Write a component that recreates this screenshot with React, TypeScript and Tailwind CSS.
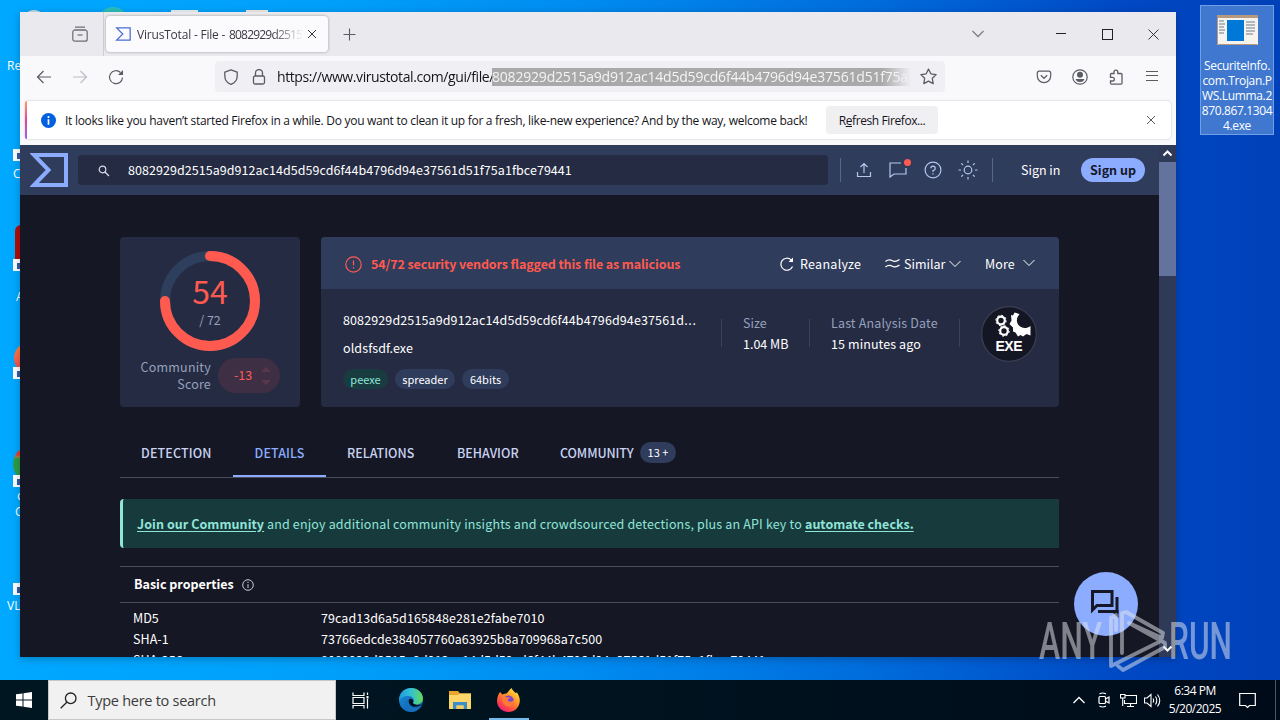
import type { ReactNode } from "react";

const hash = "8082929d2515a9d912ac14d5d59cd6f44b4796d94e37561d51f75a1fbce79441";

function Icon({ size = 16, box = 16, sw = 1.2, className = "", children }: { size?: number; box?: number; sw?: number; className?: string; children: ReactNode }) {
  return (
    <svg width={size} height={size} viewBox={`0 0 ${box} ${box}`} fill="none" stroke="currentColor" strokeWidth={sw} className={"shrink-0 " + className}>
      {children}
    </svg>
  );
}

function Sigma({ size, h, color, sw }: { size: number; h: number; color: string; sw: number }) {
  return (
    <svg width={size} height={h} viewBox="0 0 38 34" preserveAspectRatio="none" fill="none" stroke={color} strokeWidth={sw} className="shrink-0">
      <path d="M4 2H36V32H4L18.500 17Z" />
    </svg>
  );
}

function TabStrip() {
  return (
    <div className="flex h-11 shrink-0 bg-[#eaeaee] text-[#5b5b66]">
      <div className="flex w-[84px] items-center justify-end border-r border-[#cfcfd6] pr-[15px]">
        <Icon size={16} className="text-[#6c6c74]">
          <path d="M3 1.200H13M2 4H14" />
          <rect x="0.800" y="4" width="14.400" height="11.200" rx="2" />
          <path d="M5.500 9H10.500" />
        </Icon>
      </div>
      <div className="my-1 ml-0.5 flex w-[222px] items-center rounded bg-[#fbfbfd] pl-[9px] pr-2.5 shadow-[0_0_3px_rgba(0,0,0,0.35)]">
        <Sigma size={16} h={14} color="#4a6dd0" sw={3} />
        <div className="ml-1.5 flex w-[165px] whitespace-nowrap pt-px font-['Open_Sans','Noto_Sans',sans-serif] text-[12px] text-[#3a3944] [mask-image:linear-gradient(90deg,#000_135px,transparent_166px)]">
          <span className="w-[92px] shrink-0 tracking-[-0.2px]">VirusTotal - File -</span>
          <span className="tracking-[-0.8px]">8082929d2515</span>
        </div>
        <Icon size={10} box={10} sw={1} className="ml-[5px] text-[#33333b]">
          <path d="M1 1L9 9M9 1L1 9" />
        </Icon>
      </div>
      <div className="flex w-[42px] items-center justify-center">
        <Icon size={13} box={13} sw={1.1}>
          <path d="M6.500 0.500V12.500M0.500 6.500H12.500" />
        </Icon>
      </div>
      <div className="flex-1" />
      <div className="flex w-9 items-center justify-center">
        <Icon size={14} box={14} sw={1.3} className="text-[#7d7d85]">
          <path d="M1.500 4L7 9.500L12.500 4" />
        </Icon>
      </div>
      <div className="ml-[42px] flex w-[46px] items-center justify-center text-[#222]">
        <Icon size={10} box={10} sw={1}><path d="M0 4.500H10" /></Icon>
      </div>
      <div className="flex w-[46px] items-center justify-center text-[#222]">
        <Icon size={11} box={11} sw={1}><rect x="0.500" y="0.500" width="10" height="10" /></Icon>
      </div>
      <div className="flex w-[46px] items-center justify-center text-[#222]">
        <Icon size={11} box={11} sw={0.9}><path d="M0.500 0.500L10.500 10.500M10.500 0.500L0.500 10.500" /></Icon>
      </div>
    </div>
  );
}

function ToolButton({ children }: { children: ReactNode }) {
  return <div className="flex h-full w-9 shrink-0 items-center justify-center">{children}</div>;
}

function NavBar() {
  return (
    <div className="flex h-[41px] shrink-0 items-center bg-[#f9f9fb] px-1.5 text-[#5b5b66]">
      <ToolButton><Icon><path d="M15 8H1.500M7.500 2L1.500 8L7.500 14" /></Icon></ToolButton>
      <ToolButton><Icon className="text-[#bdbdc4]"><path d="M1 8H14.500M8.500 2L14.500 8L8.500 14" /></Icon></ToolButton>
      <ToolButton>
        <Icon><path d="M14.500 8.500A6.500 6.500 0 1 1 12.500 3.500" /><path d="M15 1V6H10Z" fill="currentColor" stroke="none" /></Icon>
      </ToolButton>
      <div className="ml-[81px] flex h-[31px] w-[730px] items-center rounded bg-[#f0f0f4] pl-2">
        <Icon sw={1.300}><path d="M8 0.800L14.200 3.200V7C14.200 11 11.500 14 8 15.300C4.500 14 1.800 11 1.800 7V3.200Z" strokeLinejoin="round" /></Icon>
        <Icon sw={1.300} className="ml-3">
          <rect x="2.500" y="7" width="11" height="8" rx="1.500" />
          <path d="M4.500 7V4A3.500 3.500 0 0 1 11.500 4V7" />
        </Icon>
        <div className="ml-2.5 flex w-[634px] whitespace-nowrap font-['Open_Sans','Noto_Sans',sans-serif] text-[14px] leading-[18px] [mask-image:linear-gradient(90deg,#000_605px,transparent_634px)]">
          <span className="w-[215px] shrink-0 tracking-[-0.41px] text-[#15141a]">https://www.virustotal.com/gui/file/</span>
          <span className="w-[419px] shrink-0 bg-[#a9a9a9] tracking-[-0.2px] text-[#f4f4f4]">{hash.slice(0, 54)}</span>
        </div>
        <Icon size={17} sw={1.200} className="ml-[9px] text-[#5b5b66]">
          <path d="M8 1L10.200 5.500L15.200 6.200L11.600 9.700L12.400 14.700L8 12.300L3.600 14.700L4.400 9.700L0.800 6.200L5.800 5.500Z" strokeLinejoin="round" />
        </Icon>
      </div>
      <div className="flex-1" />
      <ToolButton>
        <Icon><path d="M3 2.200H13A1.700 1.700 0 0 1 14.700 4V7A6.700 6.700 0 0 1 1.300 7V4A1.700 1.700 0 0 1 3 2.200Z" /><path d="M4.800 6.200L8 9.300L11.200 6.200" /></Icon>
      </ToolButton>
      <ToolButton>
        <Icon><circle cx="8" cy="8" r="7.200" /><circle cx="8" cy="5.800" r="2.400" fill="currentColor" /><path d="M3.600 10H12.400C12 12 10.500 13 8 13S4 12 3.600 10Z" fill="currentColor" stroke="none" /></Icon>
      </ToolButton>
      <ToolButton>
        <Icon sw={1.300}><path d="M6 4.500V3A1.900 1.900 0 0 1 9.800 3V4.500H13A1 1 0 0 1 14 5.500V14.300A1 1 0 0 1 13 15.200H3.500A1 1 0 0 1 2.500 14.300V12H4.500A1.800 1.800 0 0 0 4.500 8.300H2.500V5.500A1 1 0 0 1 3.500 4.500Z" /></Icon>
      </ToolButton>
      <ToolButton><Icon><path d="M2 2.500H14M2 6.500H14M2 11.500H14" /></Icon></ToolButton>
    </div>
  );
}

function Notice() {
  return (
    <div className="flex h-12 shrink-0 bg-[#f9f9fb] pb-[6px] pl-[5px] pr-[5px] pt-1">
      <div className="flex flex-1 items-center rounded bg-white shadow-[0_0_2px_rgba(0,0,0,0.25)]">
        <div className="h-full w-0.5 shrink-0 rounded-l bg-linear-to-b from-[#ff9a62] via-[#e0409a] to-[#9059ff]" />
        <svg width="15" height="15" viewBox="0 0 15 15" className="ml-3.5 shrink-0">
          <circle cx="7.500" cy="7.500" r="7.500" fill="#0060df" />
          <path d="M7.500 3V5M7.500 6.300V11.800" stroke="#fff" strokeWidth="1.700" />
        </svg>
        <div className="ml-[9px] w-[745px] whitespace-nowrap pt-0.5 font-['Open_Sans','Noto_Sans',sans-serif] text-[12px] tracking-[-0.28px] text-[#15141a]">
          It looks like you haven’t started Firefox in a while. Do you want to clean it up for a fresh, like-new experience? And by the way, welcome back!
        </div>
        <div className="ml-4 flex h-7 w-[112px] items-center justify-center whitespace-nowrap rounded bg-[#f0f0f3] pt-0.5 font-['Open_Sans','Noto_Sans',sans-serif] text-[12px] tracking-[-0.4px] text-[#15141a]">
          R<span className="underline">e</span>fresh Firefox...
        </div>
        <div className="flex-1" />
        <Icon size={10} box={10} sw={1} className="mr-[15px] text-[#5b5b66]"><path d="M1 1L9 9M9 1L1 9" /></Icon>
      </div>
    </div>
  );
}

function SiteHeader() {
  return (
    <div className="flex h-[50px] shrink-0 items-center bg-[#2f3c5b] pl-2.5 text-[#b5c6f0]">
      <Sigma size={38} h={34} color="#8bacff" sw={4} />
      <div className="ml-2.5 flex h-[30px] w-[750px] items-center rounded bg-[#252b42] pl-5">
        <Icon size={12} box={12} sw={1.200} className="mt-0.5 text-[#d8dcea]"><circle cx="4.500" cy="4.500" r="3.300" /><path d="M7 7L11 11" /></Icon>
        <span className="ml-[18px] whitespace-nowrap text-[12.5px] leading-5 tracking-[0.05px] text-white">{hash}</span>
      </div>
      <div className="ml-3 h-6 w-px bg-[#56678f]" />
      <Icon className="ml-[15px]" sw={1.200}><path d="M8 11V2M4.500 5L8 1.500L11.500 5M1.500 10V14.500H14.500V10" /></Icon>
      <div className="relative ml-[17px] h-[18px] w-[18px]">
        <Icon size={18} box={18} sw={1.200}><path d="M12 2H1V16L5 13H17V7" /></Icon>
        <div className="absolute -right-1 -top-0.5 h-[7px] w-[7px] rounded-full bg-[#ff5a50]" />
      </div>
      <Icon size={18} box={18} className="ml-[17px]"><circle cx="9" cy="9" r="7.900" /><path d="M6.800 7.200A2.200 2.200 0 1 1 9 9.500V11M9 12.200V13.500" /></Icon>
      <Icon size={20} box={20} className="ml-4">
        <circle cx="10" cy="10" r="3.800" />
        <path d="M10 0.500V3M10 17V19.500M0.500 10H3M17 10H19.500M3.300 3.300L5 5M15 15L16.700 16.700M3.300 16.700L5 15M15 5L16.700 3.300" />
      </Icon>
      <div className="ml-[14px] h-6 w-px bg-[#56678f]" />
      <span className="ml-7 w-[39px] whitespace-nowrap text-[12.5px] leading-5 text-white">Sign in</span>
      <span className="ml-[21px] flex h-6 w-16 items-center justify-center whitespace-nowrap rounded-full bg-[#8bacff] text-[12.5px] font-bold leading-5 text-[#151827]">Sign up</span>
    </div>
  );
}

function ScoreCard() {
  return (
    <div className="flex h-[170px] w-[180px] flex-col items-center rounded bg-[#252b42] pt-3.5">
      <div className="relative h-[100px] w-[100px]">
        <svg width="100" height="100" viewBox="0 0 100 100" fill="none" strokeWidth="10">
          <circle cx="50" cy="50" r="45" stroke="#2d3f5c" />
          <path d="M50 5A45 45 0 1 1 5 50" stroke="#ff5a50" strokeLinecap="round" />
        </svg>
        <div className="absolute inset-0 flex flex-col items-center pt-[18px]">
          <span className="text-[32px] leading-[42px] text-[#ff5a50]">54</span>
          <span className="text-[12.5px] leading-[17px] text-[#95a1bd]">/ 72</span>
        </div>
      </div>
      <div className="mt-[6px] flex w-full items-center pl-5">
        <div className="w-[71px] whitespace-nowrap text-right text-[12.5px] leading-[17px] tracking-[0.2px] text-[#95a1bd]">Community<br />Score</div>
        <div className="ml-[7px] mt-px flex h-[35px] w-[62px] items-center rounded-full bg-[#3e2f44] pl-4 text-[12.5px] text-[#ff5a50]">
          <span className="w-[19px]">-13</span>
          <svg width="12" height="20" viewBox="0 0 12 20" fill="#59374a" className="ml-[7px]"><path d="M1 6L6 1L11 6ZM1 14L6 19L11 14Z" /></svg>
        </div>
      </div>
    </div>
  );
}

function FileCard() {
  return (
    <div className="ml-[21px] flex h-[170px] w-[738px] flex-col overflow-hidden rounded bg-[#252b42] text-[12.5px] leading-5">
      <div className="flex h-[52px] items-center bg-[#2f3c5b] pl-6 pt-0.5 text-white">
        <Icon size={17} box={17} className="text-[#ff5a50]"><circle cx="8.500" cy="8.500" r="7.700" /><path d="M8.500 4.500V9.500M8.500 11V12.500" /></Icon>
        <span className="ml-[9px] w-[310px] whitespace-nowrap font-bold tracking-[-0.12px] text-[#ff5a50]">54/72 security vendors flagged this file as malicious</span>
        <Icon size={14} box={14} className="ml-[99px]"><path d="M12.500 9.500A6 6 0 1 1 11 2.800" /><path d="M13 0.500V5H8.500Z" fill="currentColor" stroke="none" /></Icon>
        <span className="ml-1.5 w-[62px] whitespace-nowrap tracking-[0.28px]">Reanalyze</span>
        <Icon size={15} box={15} className="ml-[23px]"><path d="M0.500 4.500C4 1.500 6 3 8 4S12 4.500 14.500 2.500M0.500 10C4 7 6 8.500 8 9.500S12 10 14.500 8" /></Icon>
        <span className="ml-[4px] w-[42px] whitespace-nowrap">Similar</span>
        <Icon size={12} box={12} sw={1} className="ml-[3px]"><path d="M0.500 3L6 8.500L11.500 3" /></Icon>
        <span className="ml-[24px] w-[31px] whitespace-nowrap tracking-[0.1px]">More</span>
        <Icon size={12} box={12} sw={1} className="ml-[7px]"><path d="M0.500 2L6 7.500L11.500 2" /></Icon>
      </div>
      <div className="flex flex-1 pl-[22px] text-white">
        <div className="w-[378px] pt-[21px]">
          <div className="whitespace-nowrap tracking-[0.12px]">{hash.slice(0, 48)}<span className="tracking-[0.7px]">...</span></div>
          <div className="mt-2 tracking-[0.1px]">oldsfsdf.exe</div>
          <div className="mt-[11px] flex gap-[7px] text-[11px] leading-5">
            <span className="flex h-5 w-[45px] items-center justify-center rounded-full bg-[#183c40] text-[#90e5d9]">peexe</span>
            <span className="flex h-5 w-[60px] items-center justify-center rounded-full bg-[#2f3c5b]">spreader</span>
            <span className="flex h-5 w-[47px] items-center justify-center rounded-full bg-[#2f3c5b]">64bits</span>
          </div>
        </div>
        <div className="mt-[30px] flex h-7 w-[88px] items-center whitespace-nowrap border-l border-[#38435f] pl-[21px] leading-[21px]">
          <div>
            <div className="text-[#95a1bd]">Size</div>
            <div>1.04 MB</div>
          </div>
        </div>
        <div className="mt-[30px] flex h-7 w-[151px] items-center whitespace-nowrap border-x border-[#38435f] pl-[21px] leading-[21px]">
          <div>
            <div className="tracking-[0.15px] text-[#95a1bd]">Last Analysis Date</div>
            <div className="tracking-[0.1px]">15 minutes ago</div>
          </div>
        </div>
        <svg width="56" height="56" viewBox="0 0 56 56" className="ml-[21px] mt-[17px]">
          <circle cx="28" cy="28" r="27.300" fill="#151624" stroke="#3b3f52" strokeWidth="1.200" />
          <g fill="none" stroke="#fff">
            <circle cx="20" cy="14.500" r="3.800" strokeWidth="2.200" /><circle cx="20" cy="14.500" r="5.200" strokeWidth="1" strokeDasharray="2 2" />
            <circle cx="23" cy="25" r="3.800" strokeWidth="2.200" /><circle cx="23" cy="25" r="5.200" strokeWidth="1" strokeDasharray="2 2" />
          </g>
          <path d="M30 9L32 9.500L33.500 6.500L37 7.500L38.500 8.500C34.500 12 35 18.500 40 21C43 22.500 46 22.500 49.500 20V29.500L45.500 28L42 30.500L39.500 29L37 30.500L34.500 26.500L32 25.500V21.500L28.500 18L30.500 14.500Z" fill="#fff" />
          <text x="28" y="44.500" textAnchor="middle" textLength="27" fontFamily="Liberation Sans, sans-serif" fontSize="14" fontWeight="700" fill="#fff">EXE</text>
        </svg>
      </div>
    </div>
  );
}

function Tabs() {
  return (
    <div className="mt-[22px] flex h-[49px] shrink-0 items-stretch whitespace-nowrap border-b border-[#4b4d5c] text-[12.5px] font-medium leading-[47px] text-[#c8d3f2]">
      <span className="w-[113px] pl-[21px] tracking-[0.15px]">DETECTION</span>
      <span className="flex w-[93px] justify-center border-b-2 border-[#8bacff] tracking-[0.1px] text-[#8bacff]">DETAILS</span>
      <span className="w-[110px] pl-[21px]">RELATIONS</span>
      <span className="w-[103px] pl-[21px]">BEHAVIOR</span>
      <span className="flex items-start pl-[21px]">
        <span className="w-[80px] tracking-[-0.1px]">COMMUNITY</span>
        <span className="mt-[13px] flex h-[21px] w-9 items-center justify-center rounded-full bg-[#2f3c5b] text-[11px] font-normal text-white">13 +</span>
      </span>
    </div>
  );
}

function Row({ name, value }: { name: string; value: string }) {
  return (
    <div className="flex h-[21px] whitespace-nowrap pl-[13px] leading-[21px] tracking-[0.06px]">
      <span className="w-[188px]">{name}</span>
      <span>{value}</span>
    </div>
  );
}

function Page() {
  return (
    <div className="flex min-h-0 flex-1 bg-[#161724] font-['Noto_Sans_CJK_SC',sans-serif]">
      <div className="flex min-w-0 flex-1 flex-col overflow-hidden">
        <SiteHeader />
        <div className="flex min-h-0 flex-1 flex-col overflow-hidden pl-[100px] pr-[100px] pt-[42px]">
          <div className="flex shrink-0"><ScoreCard /><FileCard /></div>
          <Tabs />
          <div className="mt-[21px] flex h-[49px] shrink-0 items-center whitespace-nowrap rounded-l border-l-[3px] border-[#90e5d9] bg-[#173a3c] pl-3.5 text-[12.5px] leading-5 text-[#90e5d9]">
            <span className="w-[127px] font-bold tracking-[0.06px] underline underline-offset-2">Join our Community</span>
            <span className="ml-[3px] w-[538px] tracking-[0.16px]">and enjoy additional community insights and crowdsourced detections, plus an API key to</span>
            <span className="font-bold underline underline-offset-2">automate checks.</span>
          </div>
          <div className="mt-[18px] flex h-[37px] shrink-0 items-center border-y border-[#4b4d5c] pl-3.5 text-[12.5px] font-bold text-white">
            Basic properties
            <Icon size={12} box={12} sw={1} className="ml-2 text-[#c8ccd8]"><circle cx="6" cy="6" r="5.300" /><path d="M6 2.700V4M6 5.200V9" /></Icon>
          </div>
          <div className="mt-1 shrink-0 text-[12.5px] text-white">
            <Row name="MD5" value="79cad13d6a5d165848e281e2fabe7010" />
            <Row name="SHA-1" value="73766edcde384057760a63925b8a709968a7c500" />
            <Row name="SHA-256" value={hash} />
          </div>
        </div>
      </div>
      <div className="flex w-[17px] shrink-0 flex-col items-center justify-between bg-[#2f3a58] text-white">
        <Icon size={17} box={17} sw={2}><path d="M4.500 10.500L8.500 6.500L12.500 10.500" /></Icon>
        <div className="h-[114px] w-full bg-[#63739d]" />
        <div className="flex-1" />
        <Icon size={17} box={17} sw={2}><path d="M4.500 6.500L8.500 10.500L12.500 6.500" /></Icon>
      </div>
    </div>
  );
}

function Shortcut({ className }: { className: string }) {
  return <div className={"absolute h-3 w-3 bg-white " + className}><div className="ml-1 mt-1 h-1.5 w-1.5 bg-[#315ea8]" /></div>;
}

function DesktopIcons() {
  return (
    <div className="font-['Open_Sans','Noto_Sans',sans-serif] text-[12px] leading-3 text-white">
      <div className="absolute left-[22px] top-2.5 h-7 w-6 rounded-full bg-[#c9d9e6]" />
      <div className="absolute left-[97px] top-[7px] h-9 w-8 rounded-full bg-[#2bbdbb]" />
      <div className="absolute left-[171px] top-2.5 h-7 w-[27px] bg-[#e9f1f6]" />
      <div className="absolute left-[246px] top-2.5 h-7 w-[22px] bg-[#f0ebe9]" />
      <span className="absolute left-[7px] top-[60px]">Re</span>
      <Shortcut className="left-[13px] top-[149px]" />
      <span className="absolute left-[13px] top-[168px]">C</span>
      <div className="absolute left-[15px] top-[225px] h-10 w-8 rounded-md bg-[#b00f0a]" />
      <Shortcut className="left-[13px] top-[259px]" />
      <span className="absolute left-4 top-[291px]">A</span>
      <div className="absolute left-[14px] top-[342px] h-8 w-8 rounded-full bg-linear-to-b from-[#ff8a3a] to-[#ee3a55]" />
      <Shortcut className="left-[13px] top-[367px]" />
      <div className="absolute left-[13px] top-[446px] h-9 w-9 rounded-full bg-linear-to-b from-[#e04035] from-25% to-[#2c9c48] to-35%" />
      <Shortcut className="left-[13px] top-[475px]" />
      <span className="absolute left-[17px] top-[490px]">c</span>
      <span className="absolute left-[15px] top-[506px]">C</span>
      <Shortcut className="left-[13px] top-[583px]" />
      <span className="absolute left-[7px] top-[600px]">VL</span>
      <div className="absolute left-[1200px] top-[5px] flex h-[130px] w-[74px] flex-col items-center border border-[#6f9fe8] bg-[#4078d0] pt-[9px]">
        <svg width="41" height="30" viewBox="0 0 41 30" className="shrink-0">
          <rect width="41" height="30" fill="#f6f3ee" /><rect width="41" height="3" fill="#b79a7e" />
          <rect x="10" y="5" width="17" height="21" fill="#0078d7" />
          <path d="M2 6H7M2 9H8M2 12H7M2 15H8M2 18H7M29 7H38M29 10H38M29 13H38M29 16H38M29 19H36" stroke="#6d7d8c" />
          <path d="M0.500 2V29.500H40.500" fill="none" stroke="#b79a7e" />
        </svg>
        <div className="mt-[13px] whitespace-nowrap text-center text-[12px] leading-[15px] tracking-[-0.35px]">
          SecuriteInfo.<br />com.Trojan.P<br />WS.Lumma.2<br />870.867.1304<br />4.exe
        </div>
      </div>
    </div>
  );
}

function Taskbar() {
  return (
    <div className="absolute bottom-0 left-0 flex h-10 w-full items-center bg-linear-to-r from-[#001722] via-[#00131f] to-[#000b19] font-['Open_Sans','Noto_Sans',sans-serif] text-white">
      <div className="flex w-12 justify-center">
        <svg width="16" height="16" viewBox="0 0 16 16" fill="#fff"><path d="M0 2.300L6.500 1.400V7.500H0ZM7.500 1.200L16 0V7.500H7.500ZM0 8.500H6.500V14.600L0 13.700ZM7.500 8.500H16V16L7.500 14.800Z" /></svg>
      </div>
      <div className="flex h-full w-72 items-center border border-[#c4c8ca] bg-[#f1f1f1] pl-[11px] text-[#3c3c3c]">
        <Icon size={17} box={17} sw={1.300} className="text-[#222]"><circle cx="10.700" cy="6.300" r="5.300" /><path d="M6.800 10.200L0.700 16.300" /></Icon>
        <span className="ml-[10.500px] whitespace-nowrap pt-0.5 text-[14.5px] tracking-[-0.27px]">Type here to search</span>
      </div>
      <div className="flex w-12 justify-center">
        <Icon size={17} box={17} sw={1.200}><path d="M1 0.500V3.500H12V0.500M1 16.500V13.500H12V16.500M1 5.500H12V11.500H1ZM15.500 0.500V3M15.500 7V16.500" /><path d="M14.500 4H16.500V6.500H14.500Z" fill="currentColor" stroke="none" /></Icon>
      </div>
      <div className="ml-[3px] flex w-12 justify-center">
        <svg width="24" height="24" viewBox="0 0 24 24">
          <defs>
            <linearGradient id="edgeTop" x1="0" y1="0.500" x2="1" y2="0.500"><stop offset="0" stopColor="#1b9de2" /><stop offset="0.500" stopColor="#35c1d0" /><stop offset="1" stopColor="#63d957" /></linearGradient>
            <linearGradient id="edgeLow" x1="0" y1="0" x2="1" y2="1"><stop offset="0" stopColor="#1a8fe0" /><stop offset="1" stopColor="#0c59a4" /></linearGradient>
          </defs>
          <circle cx="12" cy="12" r="12" fill="url(#edgeLow)" />
          <path d="M0.200 10C1.500 3.500 6.500 0 12 0C19 0 24 5 24 10.500C24 14 21 16.500 17.500 16.500C15 16.500 13.500 15.500 14.500 14C16 11.500 13.500 8 9.500 8C5 8 1 10 0.200 13Z" fill="url(#edgeTop)" />
          <path d="M9 11.500C8 16 12 20 17 19.500C19 19.300 21.500 18.500 22.500 17.500C20 22 15 24.500 10.500 23.700C5 21 4.500 14 9 11.500Z" fill="#1670be" />
          <path d="M10 11.500C8.500 15 12 18.800 16 18.800C19 18.800 21.500 17.700 23 16C21 17 19 17.200 17 16.800C14.500 16.500 13.300 15.300 14.200 13.800C14.700 11 11 10 10 11.500Z" fill="#00121d" />
        </svg>
      </div>
      <div className="flex w-[49px] justify-center">
        <svg width="22" height="19" viewBox="0 0 22 19">
          <path d="M0 0H9L11 2.500H22V18H0Z" fill="#e9a52c" /><path d="M0 4H9L11 2.500H22V18H0Z" fill="#ffd769" />
          <path d="M4 11H18V18H14.500V14.500H7.500V18H4Z" fill="#3b8ec9" /><path d="M7.500 14.500H14.500V18H7.500Z" fill="#f3cc65" />
        </svg>
      </div>
      <div className="flex h-full w-[49px] flex-col items-center pt-2">
        <svg width="23" height="24" viewBox="0 0 23 24">
          <defs><linearGradient id="fox" x1="0.900" y1="0" x2="0.200" y2="1"><stop offset="0" stopColor="#fff04a" /><stop offset="0.400" stopColor="#ff9a26" /><stop offset="0.800" stopColor="#ff3d4d" /><stop offset="1" stopColor="#e3188c" /></linearGradient></defs>
          <path d="M3 4L5.500 6.500C7 5.500 8.500 5.500 9.500 5.500C11 4.500 12 2 14.500 0C15 2 17 3 18.500 5L20 4.500C21.500 7 23 9.500 22.800 13C22.500 19.500 17.500 24 11.500 24S0 19.500 0 13C0 9.500 1 6.500 3 4Z" fill="url(#fox)" />
          <circle cx="11.500" cy="12.800" r="5.300" fill="#7746d2" />
          <path d="M5 9C7 8 8.500 8.500 10 9.500L13.500 9L10.500 12C12 15 16 14 17.500 11C17.500 16.500 14 19 10.500 18.500C7 18 5 14.500 5 9Z" fill="#ff7a36" />
        </svg>
        <div className="mt-1.5 h-0.5 w-10 bg-[#76b9ed]" />
      </div>
      <div className="flex-1" />
      <Icon size={12} box={12} sw={1.300}><path d="M0.500 9L6 3.500L11.500 9" /></Icon>
      <Icon size={16} className="ml-[11px]"><rect x="3" y="4.500" width="6.500" height="7" rx="1" /><path d="M9.500 7L13 5V11L9.500 9M3.500 2Q6.500 0 10 2M3.500 14Q6.500 16 10 14" /></Icon>
      <Icon size={17} box={17} sw={1.100} className="ml-2"><path d="M5 3.500H16.500V11.500H4.500V8M10.500 11.500V14.500M7 14.500H14M0.500 2.500H5V6H0.500ZM2.700 6V14" /></Icon>
      <Icon size={17} box={17} sw={1.100} className="ml-[7px]"><path d="M0.500 6V11H3L7 14.500V2.500L3 6ZM9 6.500Q10.300 8.500 9 10.500M11.500 4.500Q14 8.500 11.500 12.500M13.500 2.500Q18 8.500 13.500 14.500" /></Icon>
      <div className="ml-[7px] w-[54px] whitespace-nowrap text-center text-[12px] leading-[18px] tracking-[-0.5px]">6:34 PM<br />5/20/2025</div>
      <Icon size={17} box={17} sw={1.200} className="ml-[17px]"><path d="M0.700 1.500H16.300V13.500H10.500L8.500 15.500L6.500 13.500H0.700Z" /></Icon>
      <div className="ml-[19px] h-full w-px bg-[#4c5663]" />
      <div className="w-1" />
    </div>
  );
}

function Watermark() {
  return (
    <svg width="194" height="66" viewBox="0 0 194 66" className="absolute left-[1039px] top-[608px]" opacity="0.520">
      <g fill="#e2e5ec" fontFamily="Roboto, sans-serif" fontSize="51" fontWeight="500">
        <text x="0" y="51" textLength="63" lengthAdjust="spacingAndGlyphs">ANY</text>
        <text x="130" y="51" textLength="63" lengthAdjust="spacingAndGlyphs">RUN</text>
      </g>
      <path
        d="M77 22V7L72 10V58L120 34M83 45V5L87 4L124 25L123 30L90 15L126 35V39L84 62L79 58"
        fill="none" stroke="#e2e5ec" strokeWidth="3.800" strokeLinejoin="round" strokeLinecap="round"
      />
    </svg>
  );
}

export default function App() {
  return (
    <div className="relative h-[720px] w-[1280px] overflow-hidden bg-[linear-gradient(90deg,#00a8ff_0%,#00a0fa_25%,#008cf0_45%,#006cdc_68%,#0048c4_88%,#0040b8_100%)]">
      <DesktopIcons />
      <div className="absolute left-5 top-3 flex h-[645px] w-[1156px] flex-col overflow-hidden shadow-[0_2px_8px_rgba(0,0,0,0.25)]">
        <TabStrip />
        <NavBar />
        <Notice />
        <Page />
      </div>
      <Taskbar />
      <div className="absolute left-[1074px] top-[572px] flex h-16 w-16 items-center justify-center rounded-full bg-[#8bacff] text-[#161827]">
        <Icon size={32} box={32} sw={3}><path d="M2.500 3.500H22V17.500H7L2.500 22ZM27 9V23.500H8" /><path d="M25.500 22H28.500V30L22 24Z" fill="currentColor" stroke="none" /></Icon>
      </div>
      <Watermark />
    </div>
  );
}
